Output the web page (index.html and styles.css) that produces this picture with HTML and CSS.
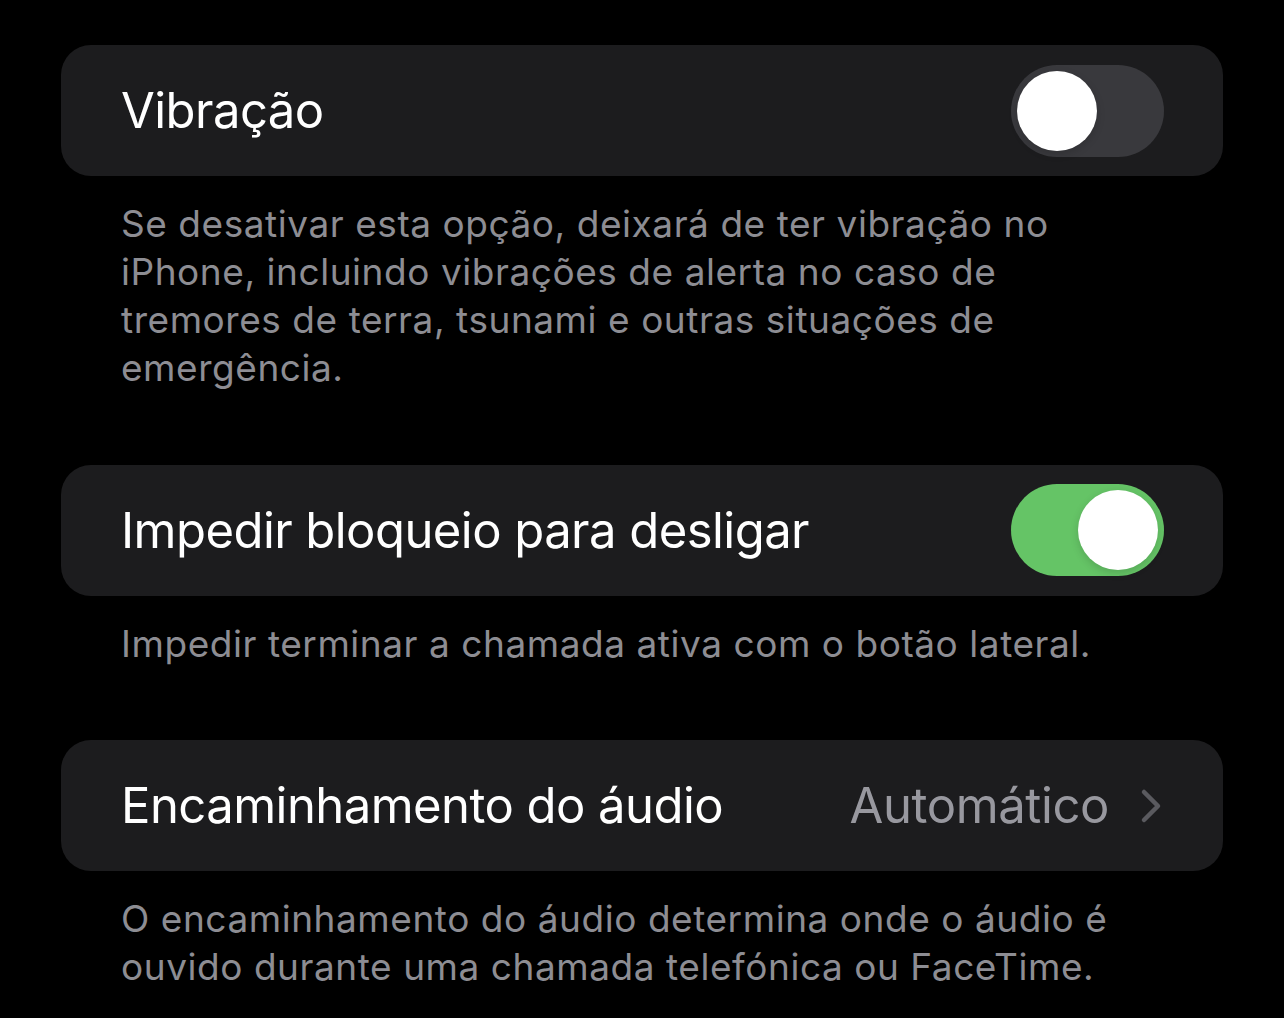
FILE: index.html
```html
<!DOCTYPE html>
<html>
<head>
	<title>Definições de chamadas</title>
	<link rel="stylesheet" href="styles.css">
</head>
<body>
	<div class="page">
		<div class="group">
			<div class="cell">
				<span class="label">Vibração</span>
				<div class="switch"><div class="knob"></div></div>
			</div>
			<p class="footer">Se desativar esta opção, deixará de ter vibração no<br>iPhone, incluindo vibrações de alerta no caso de<br>tremores de terra, tsunami e outras situações de<br>emergência.</p>
		</div>

		<div class="group">
			<div class="cell">
				<span class="label">Impedir bloqueio para desligar</span>
				<div class="switch on"><div class="knob"></div></div>
			</div>
			<p class="footer">Impedir terminar a chamada ativa com o botão lateral.</p>
		</div>

		<div class="group">
			<div class="cell">
				<span class="label">Encaminhamento do áudio</span>
				<div class="detail">
					<span class="value">Automático</span>
					<svg class="chevron" width="22" height="36" viewBox="0 0 22 36">
						<polyline points="4,4 18,18 4,32" fill="none" stroke="#5a5a5f" stroke-width="4.5" stroke-linecap="round" stroke-linejoin="round"/>
					</svg>
				</div>
			</div>
			<p class="footer">O encaminhamento do áudio determina onde o áudio é<br>ouvido durante uma chamada telefónica ou FaceTime.</p>
		</div>
	</div>
</body>
</html>
```

FILE: styles.css
```css
body {
	margin: 0;
	background-color: #000;
	font-family: Inter, "Noto Sans", sans-serif;
}
.page {
	padding: 45px 61px 0 61px;
}
.group {
	margin-bottom: 72.5px;
}
.cell {
	display: flex;
	align-items: center;
	justify-content: space-between;
	height: 131px;
	padding: 0 59px 0 60px;
	background-color: #1c1c1e;
	border-radius: 30px;
}
.label {
	color: #fff;
	font-size: 49px;
	letter-spacing: -0.55px;
}
.switch {
	position: relative;
	width: 153px;
	height: 92px;
	border-radius: 46px;
	background-color: #39393d;
}
.switch .knob {
	position: absolute;
	top: 6px;
	left: 6px;
	width: 80px;
	height: 80px;
	border-radius: 50%;
	background-color: #fff;
	box-shadow: 0 3px 8px rgba(0,0,0,0.15);
}
.switch.on {
	background-color: #65c466;
}
.switch.on .knob {
	left: 67px;
}
.detail {
	display: flex;
	align-items: center;
	gap: 31px;
}
.value {
	color: #98989f;
	font-size: 49px;
	letter-spacing: -0.4px;
}
.chevron {
	display: block;
	margin-right: 2px;
}
.footer {
	margin: 0;
	padding: 24px 60px 0 60px;
	color: #8d8d93;
	font-size: 37px;
	line-height: 48px;
	letter-spacing: 0.55px;
}
```
